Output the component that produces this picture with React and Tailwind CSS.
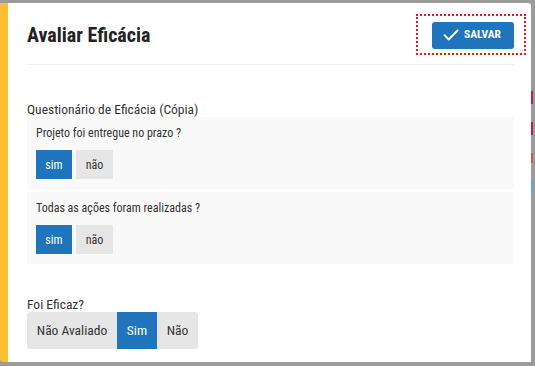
import React, { useState } from 'react';

const questions = [
  { id: 1, text: 'Projeto foi entregue no prazo ?' },
  { id: 2, text: 'Todas as ações foram realizadas ?' },
];

const CheckIcon = () => (
  <svg width="16" height="12" viewBox="0 0 16 12" fill="none" stroke="currentColor" strokeWidth="1.9" strokeLinecap="round" strokeLinejoin="round">
    <path d="M1.5 6.2l4.2 4.3L14.5 1.5" />
  </svg>
);

const App = () => {
  const [answers, setAnswers] = useState({ 1: 'sim', 2: 'sim' });
  const [eficaz, setEficaz] = useState('Sim');

  return (
    <div className="w-[535px] h-[366px] bg-[#9b9b9b] overflow-hidden pt-[3px] flex" style={{ fontFamily: '"Roboto Condensed", Roboto, "Liberation Sans", sans-serif' }}>
      <div className="w-[531px] h-[359px] bg-white border-l-[8px] border-[#fbc02d] rounded-bl-[4px] rounded-tr-[3px] pl-[19px] pr-[17px]">
        {/* Header */}
        <div className="flex items-center justify-between pt-[18px] pb-[15px] border-b border-[#eeeeee]">
          <h1 className="text-[20px] leading-[27px] font-bold text-[#222222] mt-[1px]">Avaliar Eficácia</h1>
          <div className="relative">
            <span className="absolute -left-[16px] -top-[8px] -right-[12px] -bottom-[6px] border-2 border-dotted border-[#e0191c]"></span>
            <button className="h-[27px] w-[82px] flex items-center pl-[11px] gap-[5px] bg-[#1f74bb] rounded-[3px] text-white text-[11.5px] font-bold">
              <CheckIcon />
              SALVAR
            </button>
          </div>
        </div>

        {/* Questionario */}
        <div className="mt-[36px] text-[13.5px] leading-[16px] text-[#333333]">Questionário de Eficácia (Cópia)</div>
        <div className="flex flex-col gap-[3px]">
          {questions.map(q => (
            <div key={q.id} className="bg-[#f9f9f9] pl-[9px] pt-[8px] pb-[10px]">
              <div className="text-[12px] leading-[16px] text-[#333333]">{q.text}</div>
              <div className="flex gap-[4px] mt-[9px]">
                {['sim', 'não'].map(opt => (
                  <button
                    key={opt}
                    onClick={() => setAnswers({ ...answers, [q.id]: opt })}
                    className={answers[q.id] === opt
                      ? 'w-[36px] h-[29px] text-[12px] bg-[#1f74bb] text-white'
                      : 'w-[37px] h-[29px] text-[12px] bg-[#e6e6e6] text-[#333333]'}
                  >
                    {opt}
                  </button>
                ))}
              </div>
            </div>
          ))}
        </div>

        {/* Foi eficaz */}
        <div className="mt-[33px] text-[13.5px] leading-[15px] text-[#333333]">Foi Eficaz?</div>
        <div className="inline-flex h-[37px] bg-[#e6e6e6] rounded-[3px] overflow-hidden">
          {[
            { label: 'Não Avaliado', w: 'w-[90px]' },
            { label: 'Sim', w: 'w-[40px]' },
            { label: 'Não', w: 'w-[41px]' },
          ].map(o => (
            <button
              key={o.label}
              onClick={() => setEficaz(o.label)}
              className={`${o.w} text-[13.5px] ${eficaz === o.label ? 'bg-[#1f74bb] text-white' : 'text-[#333333]'}`}
            >
              {o.label}
            </button>
          ))}
        </div>
      </div>

      {/* background page peeking through on the right */}
      <div className="flex-1 flex flex-col pt-[88px] gap-[18px]">
        <div className="h-[13px] w-[2px] bg-[#c2185b]"></div>
        <div className="h-[13px] w-[2px] bg-[#c2185b]"></div>
        <div className="h-[10px] w-[2px] bg-[#d9534f]"></div>
        <div className="h-[12px] w-[2px] bg-[#5aa9d6]"></div>
      </div>
    </div>
  );
};

export default App;
